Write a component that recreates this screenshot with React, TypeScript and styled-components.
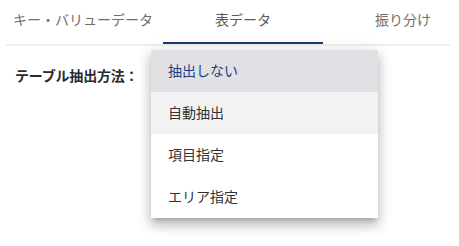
import styled, { createGlobalStyle } from "styled-components";

const GlobalStyle = createGlobalStyle`
	html, body {
		margin: 0;
		padding: 0;
		background: #ffffff;
	}
	body {
		font-family: "Noto Sans CJK JP", "Noto Sans", sans-serif;
		font-size: 14px;
		color: #333333;
	}
`;

const Page = styled.div`
	position: relative;
	width: 459px;
	height: 246px;
	overflow: hidden;
	background: #ffffff;
`;

const TabBar = styled.div`
	margin: 0 9px 0 6px;
	overflow: hidden;
	border-bottom: 2px solid #efefef;
`;

const TabStrip = styled.div`
	display: flex;
	margin-left: -3px;
`;

const Tab = styled.div<{ $active?: boolean }>`
	flex: 0 0 160px;
	height: 44px;
	box-sizing: border-box;
	display: flex;
	align-items: center;
	justify-content: center;
	padding-bottom: 4px;
	font-size: 14px;
	color: ${({ $active }) => ($active ? "#5c5c5c" : "#6e6e6e")};
	border-bottom: 2px solid ${({ $active }) => ($active ? "#163a78" : "transparent")};
	white-space: nowrap;
`;

const Content = styled.div`
	position: relative;
	padding: 19px 15px;
`;

const Label = styled.div`
	font-size: 14px;
	font-weight: 700;
	color: #2b2b2b;
	line-height: 20px;
	letter-spacing: -0.2px;
`;

const Menu = styled.ul`
	position: absolute;
	left: 151px;
	top: 4px;
	width: 227px;
	margin: 0;
	padding: 0;
	list-style: none;
	background: #ffffff;
	box-shadow: 0px 5px 5px -3px rgba(0, 0, 0, 0.2),
		0px 8px 10px 1px rgba(0, 0, 0, 0.14),
		0px 3px 14px 2px rgba(0, 0, 0, 0.12);
`;

const MenuItem = styled.li<{ $state?: "selected" | "hover" }>`
	height: 42px;
	box-sizing: border-box;
	display: flex;
	align-items: center;
	padding: 0 0 3px 17px;
	font-size: 14px;
	color: ${({ $state }) => ($state === "selected" ? "#1d3f7c" : "#333333")};
	background: ${({ $state }) =>
		$state === "selected" ? "#e1e0e4" : $state === "hover" ? "#f2f2f2" : "#ffffff"};
`;

const tabs = ["キー・バリューデータ", "表データ", "振り分け"];

const options: { label: string; state?: "selected" | "hover" }[] = [
	{ label: "抽出しない", state: "selected" },
	{ label: "自動抽出", state: "hover" },
	{ label: "項目指定" },
	{ label: "エリア指定" },
];

export default function App() {
	return (
		<Page>
			<GlobalStyle />
			<TabBar>
				<TabStrip>
					{tabs.map((t, i) => (
						<Tab key={t} $active={i === 1}>
							{t}
						</Tab>
					))}
				</TabStrip>
			</TabBar>
			<Content>
				<Label>テーブル抽出方法：</Label>
				<Menu>
					{options.map((o) => (
						<MenuItem key={o.label} $state={o.state}>
							{o.label}
						</MenuItem>
					))}
				</Menu>
			</Content>
		</Page>
	);
}
